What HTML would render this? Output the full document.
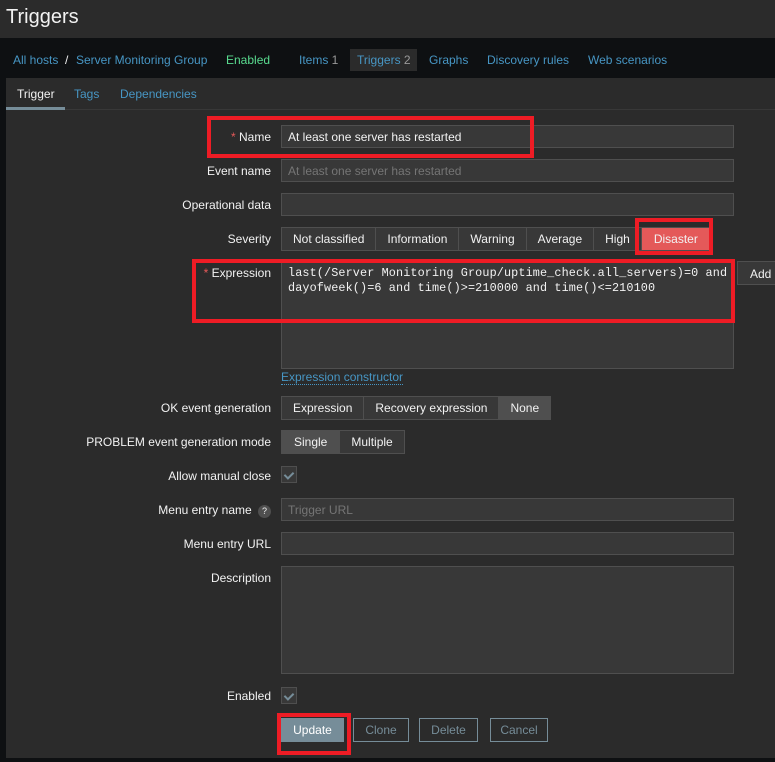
<!DOCTYPE html>
<html><head><meta charset="utf-8"><style>
*{box-sizing:border-box;margin:0;padding:0}
body{width:775px;height:762px;background:#0e1012;font-family:"Liberation Sans",Arial,sans-serif;font-size:12px;color:#f2f2f2;position:relative;overflow:hidden}
.a{position:absolute}
.hdr{left:0;top:0;width:775px;height:38px;background:#2b2b2b}
.hdr span{position:absolute;left:6px;top:6px;font-size:20px;color:#f2f2f2}
.nav a{position:absolute;top:53px;color:#4796c4;font-size:12px;text-decoration:none}
.panel{left:6px;top:78px;width:769px;height:680px;background:#2b2b2b}
.tab{top:87px;font-size:12px;color:#4796c4}
.lbl{right:504px;text-align:right;width:260px;color:#f2f2f2}
.in{left:281px;width:453px;height:23px;background:#383838;border:1px solid #4f4f4f}
.in span{position:absolute;left:6px;top:4px}
.seg{height:24px;border:1px solid #4f4f4f;background:#383838;display:flex}
.seg div{padding:0 11px;line-height:22px;border-right:1px solid #4f4f4f;color:#f2f2f2}
.seg div:last-child{border-right:none}
.red{border:4px solid #ee1c25}
.btn{top:718px;height:24px;border:1px solid #768d99;color:#768d99;line-height:22px;text-align:center}
.chk{width:16px;height:17px;border:1px solid #4f4f4f;background:#383838}
.chk:after{content:"";position:absolute;left:4px;top:3px;width:4px;height:7px;border:solid #768d99;border-width:0 2px 2px 0;transform:rotate(45deg)}
</style></head><body>
<div class="a hdr"><span>Triggers</span></div>
<div class="nav">
<a style="left:13px">All hosts</a><span class="a" style="left:65px;top:53px;color:#f2f2f2">/</span>
<a style="left:76px">Server Monitoring Group</a>
<a style="left:226px;color:#59db8f">Enabled</a>
<a style="left:299px">Items <span style="color:#999">1</span></a>
<div class="a" style="left:350px;top:49px;width:67px;height:22px;background:#2b2b2b"></div>
<a style="left:357px">Triggers <span style="color:#999">2</span></a>
<a style="left:429px">Graphs</a>
<a style="left:487px">Discovery rules</a>
<a style="left:588px">Web scenarios</a>
</div>
<div class="a panel"></div>
<div class="a tab" style="left:17px;color:#f2f2f2">Trigger</div>
<div class="a" style="left:6px;top:107px;width:59px;height:3px;background:#768d99"></div>
<div class="a" style="left:65px;top:109px;width:710px;height:1px;background:#383838"></div>
<div class="a tab" style="left:74px">Tags</div>
<div class="a tab" style="left:120px">Dependencies</div>

<div class="a lbl" style="top:130px"><span style="color:#e45959">* </span>Name</div>
<div class="a in" style="top:125px"><span>At least one server has restarted</span></div>
<div class="a lbl" style="top:164px">Event name</div>
<div class="a in" style="top:159px"><span style="color:#757575">At least one server has restarted</span></div>
<div class="a lbl" style="top:198px">Operational data</div>
<div class="a in" style="top:193px"></div>
<div class="a lbl" style="top:232px">Severity</div>
<div class="a seg" style="left:281px;top:227px"><div>Not classified</div><div>Information</div><div>Warning</div><div>Average</div><div>High</div><div style="background:#e45959;width:68px;text-align:center">Disaster</div></div>
<div class="a lbl" style="top:266px"><span style="color:#e45959">* </span>Expression</div>
<div class="a in" style="top:261px;height:108px;font-family:'Liberation Mono',monospace;font-size:11.8px;letter-spacing:0.12px;padding:4px 6px;line-height:15px;white-space:pre">last(/Server Monitoring Group/uptime_check.all_servers)=0 and
dayofweek()=6 and time()&gt;=210000 and time()&lt;=210100</div>
<div class="a" style="left:737px;top:261px;width:40px;height:24px;border:1px solid #4f4f4f;background:#383838;padding:5px 0 0 12px">Add</div>
<div class="a" style="left:281px;top:370px;color:#4796c4;border-bottom:1px dotted #4796c4">Expression constructor</div>
<div class="a lbl" style="top:401px">OK event generation</div>
<div class="a seg" style="left:281px;top:396px"><div>Expression</div><div>Recovery expression</div><div style="background:#4f4f4f">None</div></div>
<div class="a lbl" style="top:435px">PROBLEM event generation mode</div>
<div class="a seg" style="left:281px;top:430px"><div style="background:#4f4f4f;padding:0 12px">Single</div><div>Multiple</div></div>
<div class="a lbl" style="top:469px">Allow manual close</div>
<div class="a chk" style="left:281px;top:466px"></div>
<div class="a lbl" style="top:503px">Menu entry name <span style="display:inline-block;width:13px;height:13px;border-radius:50%;background:#4f4f4f;font-size:9px;text-align:center;line-height:13px;margin-left:3px">?</span></div>
<div class="a in" style="top:498px"><span style="color:#757575">Trigger URL</span></div>
<div class="a lbl" style="top:537px">Menu entry URL</div>
<div class="a in" style="top:532px"></div>
<div class="a lbl" style="top:571px">Description</div>
<div class="a in" style="top:566px;height:108px"></div>
<div class="a lbl" style="top:689px">Enabled</div>
<div class="a chk" style="left:281px;top:687px"></div>
<div class="a btn" style="left:281px;width:63px;background:#768d99;color:#fff;border-color:#768d99">Update</div>
<div class="a btn" style="left:353px;width:56px">Clone</div>
<div class="a btn" style="left:419px;width:59px">Delete</div>
<div class="a btn" style="left:490px;width:58px">Cancel</div>

<div class="a red" style="left:207px;top:116px;width:327px;height:42px"></div>
<div class="a red" style="left:635px;top:218px;width:78px;height:37px"></div>
<div class="a red" style="left:192px;top:259px;width:543px;height:64px"></div>
<div class="a red" style="left:277px;top:713px;width:74px;height:42px"></div>
</body></html>
